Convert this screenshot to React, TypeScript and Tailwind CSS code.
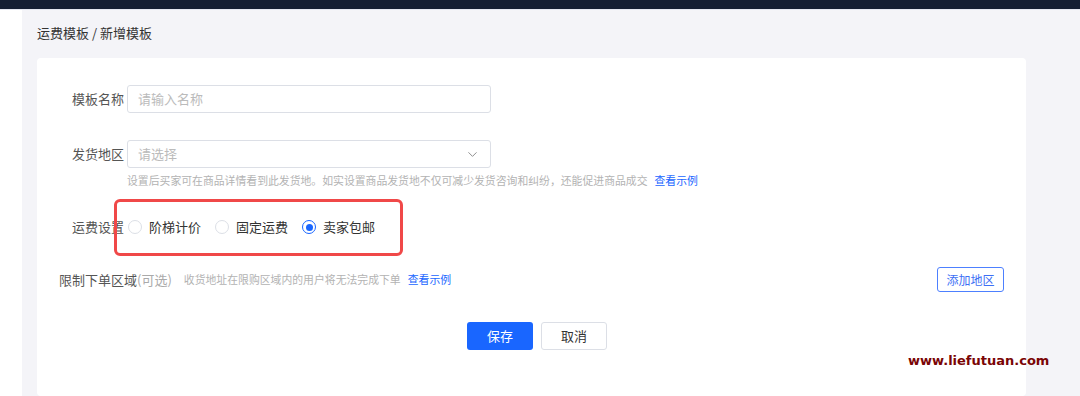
import React from "react";
import { ChevronDown } from "lucide-react";

const font = { fontFamily: '"Noto Sans CJK SC", "Noto Sans", sans-serif' };

function Radio({ checked, label }: { checked?: boolean; label: string }) {
  return (
    <div className="flex items-center gap-[7px]">
      <span
        className={
          checked
            ? "w-[14px] h-[14px] rounded-full border border-[#1966ff] flex items-center justify-center bg-white"
            : "w-[14px] h-[14px] rounded-full border border-[#dcdfe6] bg-white"
        }
      >
        {checked && <span className="w-[7px] h-[7px] rounded-full bg-[#1966ff]" />}
      </span>
      <span className="text-[13px] leading-[20px] text-[#333]">{label}</span>
    </div>
  );
}

export default function App() {
  return (
    <div className="relative w-[1080px] h-[396px] overflow-hidden flex flex-col bg-white" style={font}>
      <div className="h-[9px] bg-[#141e33] shrink-0" />
      <div className="h-px bg-[#e3e6ef] shrink-0" />
      <div className="flex flex-1 min-h-0">
        <div className="w-[22px] bg-white shrink-0" />
        <div className="flex-1 bg-[#f4f4f8] flex flex-col pl-[15px] pr-[54px] pt-[14px]">
          <div className="h-[18px] text-[13px] leading-[18px] text-[#333]">运费模板 / 新增模板</div>
          <div className="relative mt-[16px] flex-1 bg-white rounded-[4px] flex flex-col pt-[27px]">
            {/* 模板名称 */}
            <div className="flex items-center">
              <div className="w-[87px] text-right text-[13px] text-[#555] shrink-0">模板名称</div>
              <div className="ml-[3px] w-[364px] h-[28px] border border-[#dcdfe6] rounded-[3px] flex items-center px-[10px] text-[13px] text-[#bbb]">
                请输入名称
              </div>
            </div>
            {/* 发货地区 */}
            <div className="flex items-center mt-[27px]">
              <div className="w-[87px] text-right text-[13px] text-[#555] shrink-0">发货地区</div>
              <div className="ml-[3px] w-[364px] h-[28px] border border-[#dcdfe6] rounded-[3px] flex items-center justify-between pl-[10px] pr-[10px] text-[13px] text-[#bbb]">
                <span>请选择</span>
                <ChevronDown size={15} strokeWidth={1.5} color="#888" />
              </div>
            </div>
            <div className="mt-[4px] ml-[90px] h-[16px] text-[10.85px] leading-[16px] text-[#b3b3b3] flex">
              <span>设置后买家可在商品详情看到此发货地。如实设置商品发货地不仅可减少发货咨询和纠纷，还能促进商品成交</span>
              <span className="ml-[7px] text-[#1966ff]">查看示例</span>
            </div>
            {/* 运费设置 */}
            <div className="flex items-center mt-[29px] h-[20px]">
              <div className="w-[87px] text-right text-[13px] text-[#555] shrink-0">运费设置</div>
              <div className="ml-[4px] flex items-center gap-[14px]">
                <Radio label="阶梯计价" />
                <Radio label="固定运费" />
                <Radio checked label="卖家包邮" />
              </div>
            </div>
            {/* 限制下单区域 */}
            <div className="flex items-center mt-[30px] h-[25px] pl-[22px] pr-[22px]">
              <span className="text-[13px] text-[#555]">限制下单区域</span>
              <span className="text-[13px] text-[#aaa]">(可选)</span>
              <span className="ml-[12px] text-[10.85px] text-[#b3b3b3]">收货地址在限购区域内的用户将无法完成下单</span>
              <span className="ml-[7px] text-[10.85px] text-[#1966ff]">查看示例</span>
              <div className="ml-auto w-[67px] h-[25px] border border-[#4d80ff] rounded-[3px] flex items-center justify-center text-[12px] text-[#3d6ff5]">
                添加地区
              </div>
            </div>
            {/* Buttons */}
            <div className="flex mt-[30px] pl-[430px] gap-[8px]">
              <div className="w-[66px] h-[28px] rounded-[3px] bg-[#1966ff] flex items-center justify-center text-[13px] text-white">
                保存
              </div>
              <div className="w-[66px] h-[28px] rounded-[3px] border border-[#dcdfe6] bg-white flex items-center justify-center text-[13px] text-[#333]">
                取消
              </div>
            </div>
            {/* red annotation box */}
            <div className="absolute left-[77px] top-[141px] w-[289px] h-[57px] border-[3px] border-[#f04848] rounded-[6px] pointer-events-none" />
          </div>
        </div>
      </div>
      {/* watermark */}
      <div
        className="absolute left-[908px] top-[352px] text-[13px] font-bold text-[#7a0505] leading-[18px]"
        style={{ fontFamily: '"DejaVu Sans", sans-serif' }}
      >
        www.liefutuan.com
      </div>
    </div>
  );
}
